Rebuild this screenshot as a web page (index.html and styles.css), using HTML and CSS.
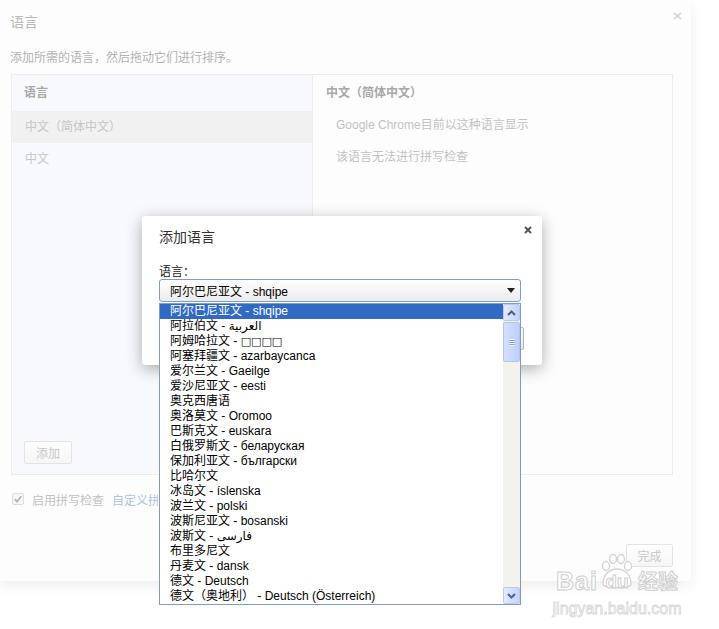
FILE: index.html
```
<!DOCTYPE html>
<html lang="zh-CN">
<head>
<meta charset="utf-8">
<title>语言</title>
<link rel="stylesheet" href="styles.css">
</head>
<body>
<div class="settings">
  <h1 class="s-title">语言</h1>
  <svg class="s-close" width="9" height="8" viewBox="0 0 9 8"><path d="M1 1 L8 7 M8 1 L1 7" stroke="#cfcfcf" stroke-width="1.6" fill="none"/></svg>
  <p class="s-desc">添加所需的语言，然后拖动它们进行排序。</p>
  <div class="panel">
    <div class="lang-col">
      <div class="col-head">语言</div>
      <div class="lang-row selected">中文（简体中文）</div>
      <div class="lang-row">中文</div>
      <button class="btn add-btn">添加</button>
    </div>
    <div class="detail-col">
      <div class="col-head detail-head">中文（简体中文）</div>
      <div class="detail-row">Google Chrome目前以这种语言显示</div>
      <div class="detail-row">该语言无法进行拼写检查</div>
    </div>
  </div>
  <div class="spell">
    <svg class="check" width="12" height="12" viewBox="0 0 12 12"><rect x="0.5" y="0.5" width="11" height="11" rx="1.5" fill="#f7f7f7" stroke="#dcdcdc"/><path d="M2.8 6.2 L5 8.6 L9.4 3.2" stroke="#b4b4b4" stroke-width="1.8" fill="none"/></svg>
    <span class="spell-text">启用拼写检查</span>
    <a class="spell-link">自定义拼写字典</a>
  </div>
  <div class="footer"><button class="btn done-btn">完成</button></div>
</div>

<div class="watermark">
  <div class="wm-logo">
    <span class="wm-en">Bai</span>
    <span class="wm-paw">
      <svg width="38" height="36" viewBox="0 0 38 36"><g fill="rgba(255,255,255,0.9)" stroke="#d4d4d4" stroke-width="1.4"><ellipse cx="8" cy="12" rx="3.5" ry="4.5"/><ellipse cx="15" cy="5" rx="3.5" ry="4.5"/><ellipse cx="23" cy="5" rx="3.5" ry="4.5"/><ellipse cx="30" cy="12" rx="3.5" ry="4.5"/><path d="M5 30 C5 20 12 15 19 15 C26 15 33 20 33 30 C33 35 5 35 5 30 Z"/></g></svg>
      <span class="wm-du">du</span>
    </span>
    <span class="wm-cn">经验</span>
  </div>
  <div class="wm-url">jingyan.baidu.com</div>
</div>

<div class="add-dialog">
  <div class="ad-title">添加语言</div>
  <svg class="ad-close" width="8" height="8" viewBox="0 0 8 8"><path d="M1 1 L7 7 M7 1 L1 7" stroke="#555" stroke-width="2" fill="none"/></svg>
  <div class="ad-label">语言：</div>
  <div class="select"><span>阿尔巴尼亚文 - shqipe</span><span class="arrow"></span></div>
  <div class="ad-buttons"><button class="btn2">添加</button><button class="btn2">取消</button></div>
</div>

<div class="dropdown">
  <div class="items">
    <div class="item hl">阿尔巴尼亚文 - shqipe</div>
    <div class="item">阿拉伯文 - العربية</div>
    <div class="item">阿姆哈拉文 - <span class="tofu">□□□□</span></div>
    <div class="item">阿塞拜疆文 - azarbaycanca</div>
    <div class="item">爱尔兰文 - Gaeilge</div>
    <div class="item">爱沙尼亚文 - eesti</div>
    <div class="item">奥克西唐语</div>
    <div class="item">奥洛莫文 - Oromoo</div>
    <div class="item">巴斯克文 - euskara</div>
    <div class="item">白俄罗斯文 - беларуская</div>
    <div class="item">保加利亚文 - български</div>
    <div class="item">比哈尔文</div>
    <div class="item">冰岛文 - íslenska</div>
    <div class="item">波兰文 - polski</div>
    <div class="item">波斯尼亚文 - bosanski</div>
    <div class="item">波斯文 - فارسی</div>
    <div class="item">布里多尼文</div>
    <div class="item">丹麦文 - dansk</div>
    <div class="item">德文 - Deutsch</div>
    <div class="item">德文（奥地利） - Deutsch (Österreich)</div>
  </div>
  <div class="scrollbar">
    <div class="sb-btn"><svg width="9" height="6" viewBox="0 0 9 6"><path d="M1 5 L4.5 1.5 L8 5" stroke="#4d6185" stroke-width="2" fill="none"/></svg></div>
    <div class="sb-thumb"><span class="grip"></span></div>
    <div class="sb-track"></div>
    <div class="sb-btn"><svg width="9" height="6" viewBox="0 0 9 6"><path d="M1 1 L4.5 4.5 L8 1" stroke="#4d6185" stroke-width="2" fill="none"/></svg></div>
  </div>
</div>
</body>
</html>
```

FILE: styles.css
```
* { box-sizing: border-box; }

html, body {
  margin: 0;
  padding: 0;
}

body {
  width: 719px;
  height: 629px;
  overflow: hidden;
  position: relative;
  background: #ffffff;
  font-family: "Liberation Sans", "DejaVu Sans", "Noto Sans CJK SC", sans-serif;
  font-size: 12px;
}

/* ---------- background settings dialog (faded) ---------- */
.settings {
  position: relative;
  width: 691px;
  height: 580px;
  margin-top: 1px;
  padding: 11px 18px 0 10px;
  background: #fdfdfd;
  border-radius: 0 3px 3px 0;
  box-shadow: 0 5px 14px rgba(0, 0, 0, 0.07);
  display: flex;
  flex-direction: column;
}

.s-title {
  margin: 0;
  font-size: 14px;
  font-weight: normal;
  line-height: 20px;
  color: #b9b9b9;
}

.s-close {
  position: absolute;
  top: 11px;
  right: 9px;
}

.s-desc {
  margin: 18px 0 0;
  line-height: 16px;
  color: #b3b3b3;
}

.panel {
  margin: 8px 0 0 1px;
  width: 662px;
  height: 401px;
  border: 1px solid #ececec;
  display: flex;
}

.lang-col {
  width: 300px;
  background: #f8f9fd;
  display: flex;
  flex-direction: column;
}

.col-head {
  height: 36px;
  line-height: 36px;
  padding-left: 12px;
  font-weight: bold;
  color: #a8a8a8;
}

.lang-row {
  height: 32px;
  line-height: 32px;
  padding-left: 13px;
  color: #c6c6c6;
}

.lang-row.selected {
  background: #f1f1f1;
}

.btn {
  font-family: inherit;
  font-size: 12px;
  height: 23px;
  padding: 0;
  border: 1px solid #e3e3e3;
  border-radius: 2px;
  background: linear-gradient(#fefefe, #f6f6f6);
  color: #c8c8c8;
}

.add-btn {
  width: 48px;
  margin: auto 0 10px 12px;
}

.detail-col {
  flex: 1;
  border-left: 1px solid #ececec;
}

.detail-head {
  height: 34px;
  padding-left: 13px;
}

.detail-row {
  height: 32px;
  line-height: 32px;
  padding-left: 23px;
  color: #c2c2c2;
}

.spell {
  margin: 14px 0 0 2px;
  height: 20px;
  display: flex;
  align-items: center;
}

.spell-text {
  margin-left: 8px;
  color: #c2c2c2;
}

.spell-link {
  margin-left: 8px;
  width: 46px;
  overflow: hidden;
  white-space: nowrap;
  color: #abc4e6;
}

.footer {
  margin-top: 35px;
  display: flex;
  justify-content: flex-end;
}

.done-btn {
  width: 47px;
}

/* ---------- watermark ---------- */
.watermark {
  position: absolute;
  left: 550px;
  top: 554px;
  width: 134px;
  display: flex;
  flex-direction: column;
  align-items: center;
}

.wm-logo {
  display: flex;
  align-items: flex-end;
  height: 38px;
}

.wm-en, .wm-du {
  font-family: "Liberation Sans", sans-serif;
  font-weight: bold;
  font-size: 25px;
  line-height: 22px;
  color: rgba(255, 255, 255, 0.9);
  -webkit-text-stroke: 1px #cfcfcf;
}

.wm-en {
  letter-spacing: 1px;
}

.wm-paw {
  position: relative;
  width: 38px;
  height: 38px;
  display: flex;
  align-items: flex-end;
  justify-content: center;
}

.wm-paw svg {
  position: absolute;
  left: 0;
  top: 0;
}

.wm-du {
  position: relative;
  font-size: 19px;
  line-height: 18px;
  margin-bottom: 1px;
}

.wm-cn {
  font-family: "Noto Sans CJK SC", sans-serif;
  font-weight: bold;
  font-size: 20px;
  line-height: 22px;
  color: rgba(255, 255, 255, 0.9);
  -webkit-text-stroke: 1px #cfcfcf;
  margin-left: 2px;
}

.wm-url {
  margin-top: 9px;
  font-family: "Liberation Sans", sans-serif;
  font-size: 16px;
  line-height: 16px;
  color: rgba(255, 255, 255, 0.9);
  -webkit-text-stroke: 0.8px #d6d6d6;
}

/* ---------- add language dialog ---------- */
.add-dialog {
  position: absolute;
  left: 142px;
  top: 216px;
  width: 400px;
  height: 149px;
  padding: 11px 18px 0 17px;
  background: #ffffff;
  border-radius: 3px;
  box-shadow: 0 4px 16px rgba(0, 0, 0, 0.32);
  display: flex;
  flex-direction: column;
}

.ad-title {
  font-size: 14px;
  line-height: 20px;
  color: #333;
}

.ad-close {
  position: absolute;
  top: 10px;
  right: 10px;
}

.ad-label {
  margin-top: 18px;
  line-height: 14px;
  color: #222;
}

.select {
  width: 362px;
  height: 23px;
  padding: 0 5px 0 10px;
  border: 1px solid #7b9cd2;
  border-radius: 3px;
  background: linear-gradient(#ffffff, #ebebeb);
  color: #000;
  display: flex;
  align-items: center;
  justify-content: space-between;
}

.arrow {
  width: 0;
  height: 0;
  border-left: 4px solid transparent;
  border-right: 4px solid transparent;
  border-top: 5px solid #222;
}

.ad-buttons {
  margin-top: 25px;
  display: flex;
  justify-content: flex-end;
  gap: 6px;
}

.btn2 {
  font-family: inherit;
  font-size: 12px;
  width: 60px;
  height: 23px;
  border: 1px solid #b5b5b5;
  border-radius: 2px;
  background: linear-gradient(#fafafa, #e9e9e9);
  color: #333;
}

/* ---------- dropdown list ---------- */
.dropdown {
  position: absolute;
  left: 159px;
  top: 303px;
  width: 362px;
  height: 302px;
  border: 1px solid #7f9db9;
  background: #fff;
  display: flex;
}

.items {
  width: 343px;
  overflow: hidden;
}

.item {
  height: 15px;
  line-height: 15px;
  padding-left: 10px;
  white-space: nowrap;
  overflow: hidden;
  color: #000;
}

.item.hl {
  background: #316ac5;
  color: #fff;
}

.tofu {
  font-family: "DejaVu Sans", sans-serif;
  font-size: 11px;
}

.scrollbar {
  width: 17px;
  background: #f3f2ed;
  display: flex;
  flex-direction: column;
}

.sb-btn {
  height: 17px;
  border: 1px solid #b7caf5;
  border-radius: 2px;
  background: linear-gradient(90deg, #e2eafe, #c2d3fc);
  display: flex;
  align-items: center;
  justify-content: center;
}

.sb-thumb {
  margin-top: 1px;
  height: 40px;
  border: 1px solid #b0c5f3;
  border-radius: 2px;
  background: linear-gradient(90deg, #d4e0fd, #bccffb);
  display: flex;
  align-items: center;
  justify-content: center;
}

.grip {
  width: 6px;
  height: 7px;
  background: repeating-linear-gradient(#eef3ff 0 1px, #8ea9e8 1px 2px);
}

.sb-track {
  flex: 1;
}
```
